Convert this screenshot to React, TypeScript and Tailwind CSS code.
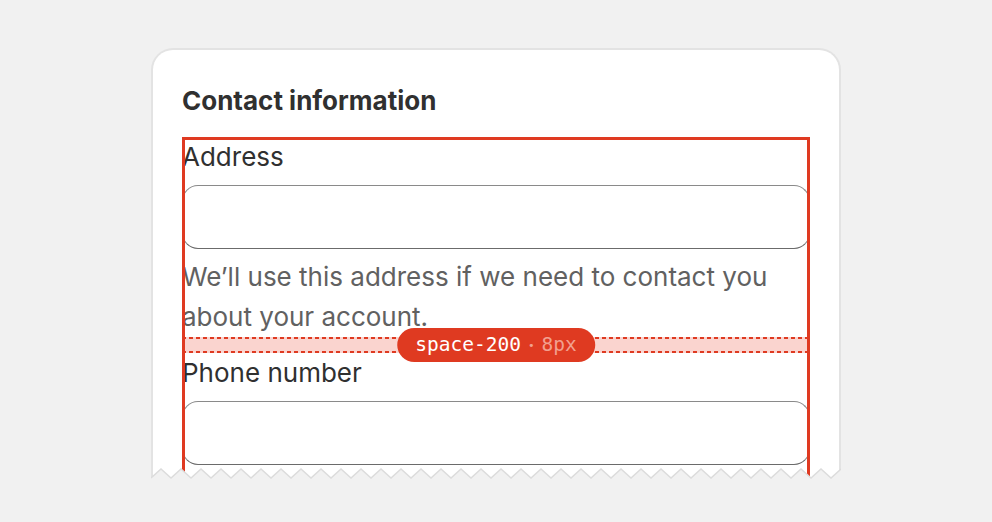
import React from "react";

const RED = "#df3a21";

// zigzag bottom edge of the "torn" card
const CARD_W = 690;
const CARD_H = 430;
const PEAK = 421;

function zigzagPoints(): [number, number][] {
  const pts: [number, number][] = [];
  for (let x = CARD_W; x >= 0; x -= 10) {
    const isPeak = ((CARD_W - x) / 10) % 2 === 0;
    pts.push([x, isPeak ? PEAK : CARD_H]);
  }
  return pts;
}

const edge = zigzagPoints();
const clip = `polygon(0 0, ${CARD_W}px 0, ${edge
  .map(([x, y]) => `${x}px ${y}px`)
  .join(", ")})`;

function DashedLine({ className }: { className: string }) {
  return (
    <div
      className={`absolute left-0 right-0 h-[2px] bg-[repeating-linear-gradient(90deg,#df3a21_0_4px,transparent_4px_7px)] ${className}`}
    />
  );
}

function SpacingBand() {
  return (
    <div className="relative h-[16px] bg-[#fad4cf]">
      <DashedLine className="top-0" />
      <DashedLine className="bottom-0" />
      <div className="absolute left-1/2 top-1/2 -translate-x-1/2 -translate-y-1/2 flex items-center gap-[7px] h-[34px] px-[18px] rounded-full bg-[#df3a21] font-['DejaVu_Sans_Mono',monospace] text-[19.5px] leading-none whitespace-nowrap">
        <span className="text-white">space-200</span>
        <span className="text-[11px] text-[#f2a08f]">•</span>
        <span className="text-[#f2a08f]">8px</span>
      </div>
    </div>
  );
}

function TextField({ label }: { label: string }) {
  return (
    <div>
      <div className="text-[26px] leading-[40px] text-[#303030] mb-2">{label}</div>
      <div className="h-[64px] rounded-[16px] border-[1.5px] border-[#8a8a8a] border-b-[#6b6b6b] bg-white" />
    </div>
  );
}

export default function App() {
  return (
    <div className="h-[522px] bg-[#f1f1f1] overflow-hidden font-['Inter',sans-serif] pt-[48px]">
      <div className="relative w-[690px] ml-[151px]">
        <div
          className="h-[430px] bg-white border-2 border-b-0 border-[#e3e3e3] rounded-t-[22px] overflow-hidden pt-[31px] px-[29px]"
          style={{ clipPath: clip }}
        >
          <h2 className="text-[26px] leading-[40px] font-bold text-[#303030] mb-4">
            Contact information
          </h2>

          <div className="relative pb-[40px]">
            <TextField label="Address" />
            <p className="mt-2 text-[26px] leading-[40px] text-[#616161]">
              We’ll use this address if we need to contact you about your account.
            </p>
            <SpacingBand />
            <TextField label="Phone number" />

            {/* highlight outline drawn over the stack */}
            <div
              className="absolute inset-0 border-[3px] pointer-events-none"
              style={{ borderColor: RED }}
            />
          </div>
        </div>

        <svg
          className="absolute left-0 top-0 pointer-events-none"
          width={CARD_W}
          height={CARD_H + 2}
          viewBox={`0 0 ${CARD_W} ${CARD_H + 2}`}
        >
          <polyline
            points={edge.map(([x, y]) => `${x},${y}`).join(" ")}
            fill="none"
            stroke="#dcdcdc"
            strokeWidth={1.5}
          />
        </svg>
      </div>
    </div>
  );
}
